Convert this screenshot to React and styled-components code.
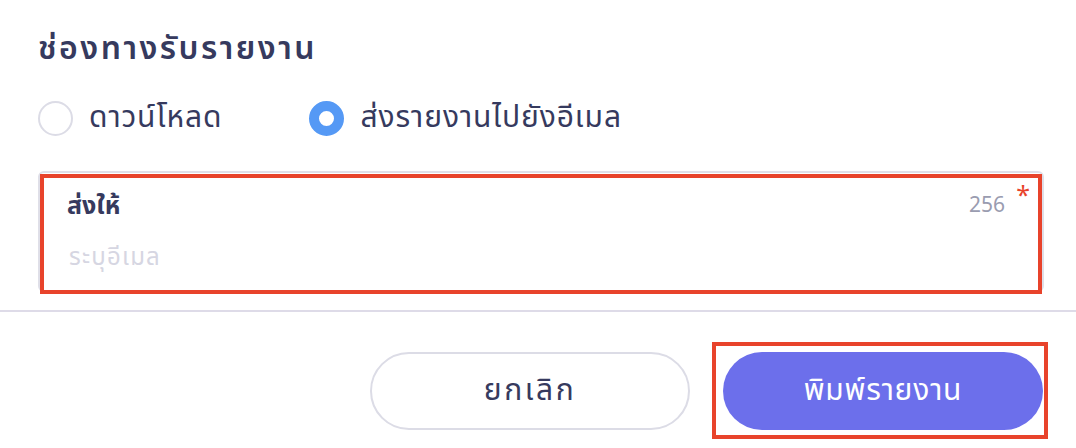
import React from "react";
import styled, { createGlobalStyle } from "styled-components";

const GlobalStyle = createGlobalStyle`
    body {
        margin: 0;
        background: #fff;
        font-family: "Noto Sans Thai", "Noto Sans", "Liberation Sans", sans-serif;
        color: #363a5e;
    }
`;

const Page = styled.div`
    width: 1076px;
    height: 448px;
    overflow: hidden;
    background: #fff;
`;

const Body = styled.div`
    padding: 27px 32px 0 38px;
`;

const Title = styled.h2`
    margin: 0;
    font-size: 32px;
    line-height: 44px;
    font-weight: 600;
    letter-spacing: 2.5px;
    color: #363a5e;
`;

const RadioGroup = styled.div`
    display: flex;
    align-items: center;
    gap: 87px;
    margin-top: 29px;
    height: 36px;
`;

const RadioOption = styled.label`
    display: flex;
    align-items: center;
    gap: 16px;
    font-size: 30px;
    letter-spacing: 0.9px;
    color: #363a5e;
    cursor: pointer;
`;

const RadioCircle = styled.span`
    width: 35px;
    height: 35px;
    flex-shrink: 0;
    border-radius: 50%;
    box-sizing: border-box;
    border: ${(props) => (props.checked ? "10px solid #5599f5" : "2px solid #dcdce6")};
    background: #fff;
`;

const FieldWrap = styled.div`
    position: relative;
    margin-top: 35px;
`;

const Field = styled.div`
    height: 121px;
    box-sizing: border-box;
    border: 2px solid #dfdfe8;
    border-radius: 6px;
    padding: 18px 37px 0 27px;
    position: relative;
`;

const FieldHead = styled.div`
    display: flex;
    justify-content: space-between;
    align-items: center;
    height: 30px;
`;

const FieldLabel = styled.span`
    font-size: 25px;
    line-height: 30px;
    font-weight: 700;
    color: #363a5e;
`;

const Counter = styled.span`
    font-size: 21px;
    line-height: 30px;
    color: #9a9cb0;
`;

const Required = styled.span`
    position: absolute;
    top: 8px;
    right: 12px;
    font-size: 25px;
    line-height: 30px;
    color: #e8432b;
`;

const Input = styled.input`
    display: block;
    width: 100%;
    height: 30px;
    border: none;
    outline: none;
    padding: 0 0 0 2px;
    margin-top: 22px;
    font-family: inherit;
    font-size: 24px;
    line-height: 30px;
    letter-spacing: 1.2px;
    color: #363a5e;
    &::placeholder {
        color: #d6d6e2;
    }
`;

const Highlight = styled.div`
    position: absolute;
    top: ${(props) => props.t}px;
    left: ${(props) => props.l}px;
    right: ${(props) => props.r}px;
    bottom: ${(props) => props.b}px;
    border: 4px solid #e8432b;
    pointer-events: none;
`;

const Divider = styled.hr`
    margin: 18px 0 0;
    border: none;
    border-top: 2px solid #dedbe8;
`;

const Footer = styled.div`
    display: flex;
    justify-content: flex-end;
    gap: 33px;
    padding: 40px 33px 0 0;
`;

const BtnWrap = styled.div`
    position: relative;
`;

const Button = styled.button`
    width: ${(props) => props.w}px;
    height: 78px;
    border-radius: 39px;
    font-family: inherit;
    font-size: 30px;
    letter-spacing: ${(props) => (props.primary ? "0.8px" : "2.6px")};
    cursor: pointer;
    border: ${(props) => (props.primary ? "none" : "2px solid #dcdce6")};
    background: ${(props) => (props.primary ? "#6c6feb" : "#fff")};
    color: ${(props) => (props.primary ? "#fff" : "#363a5e")};
`;

export default function App() {
    return (
        <Page>
            <GlobalStyle />
            <Body>
                <Title>ช่องทางรับรายงาน</Title>
                <RadioGroup>
                    <RadioOption>
                        <RadioCircle />
                        ดาวน์โหลด
                    </RadioOption>
                    <RadioOption>
                        <RadioCircle checked />
                        ส่งรายงานไปยังอีเมล
                    </RadioOption>
                </RadioGroup>
                <FieldWrap>
                    <Field>
                        <FieldHead>
                            <FieldLabel>ส่งให้</FieldLabel>
                            <Counter>256</Counter>
                        </FieldHead>
                        <Required>*</Required>
                        <Input placeholder="ระบุอีเมล" />
                    </Field>
                    <Highlight t={3} l={2} r={2} b={-2} />
                </FieldWrap>
            </Body>
            <Divider />
            <Footer>
                <Button w={320}>ยกเลิก</Button>
                <BtnWrap>
                    <Button w={320} primary>พิมพ์รายงาน</Button>
                    <Highlight t={-10} l={-11} r={-5} b={-9} />
                </BtnWrap>
            </Footer>
        </Page>
    );
}
